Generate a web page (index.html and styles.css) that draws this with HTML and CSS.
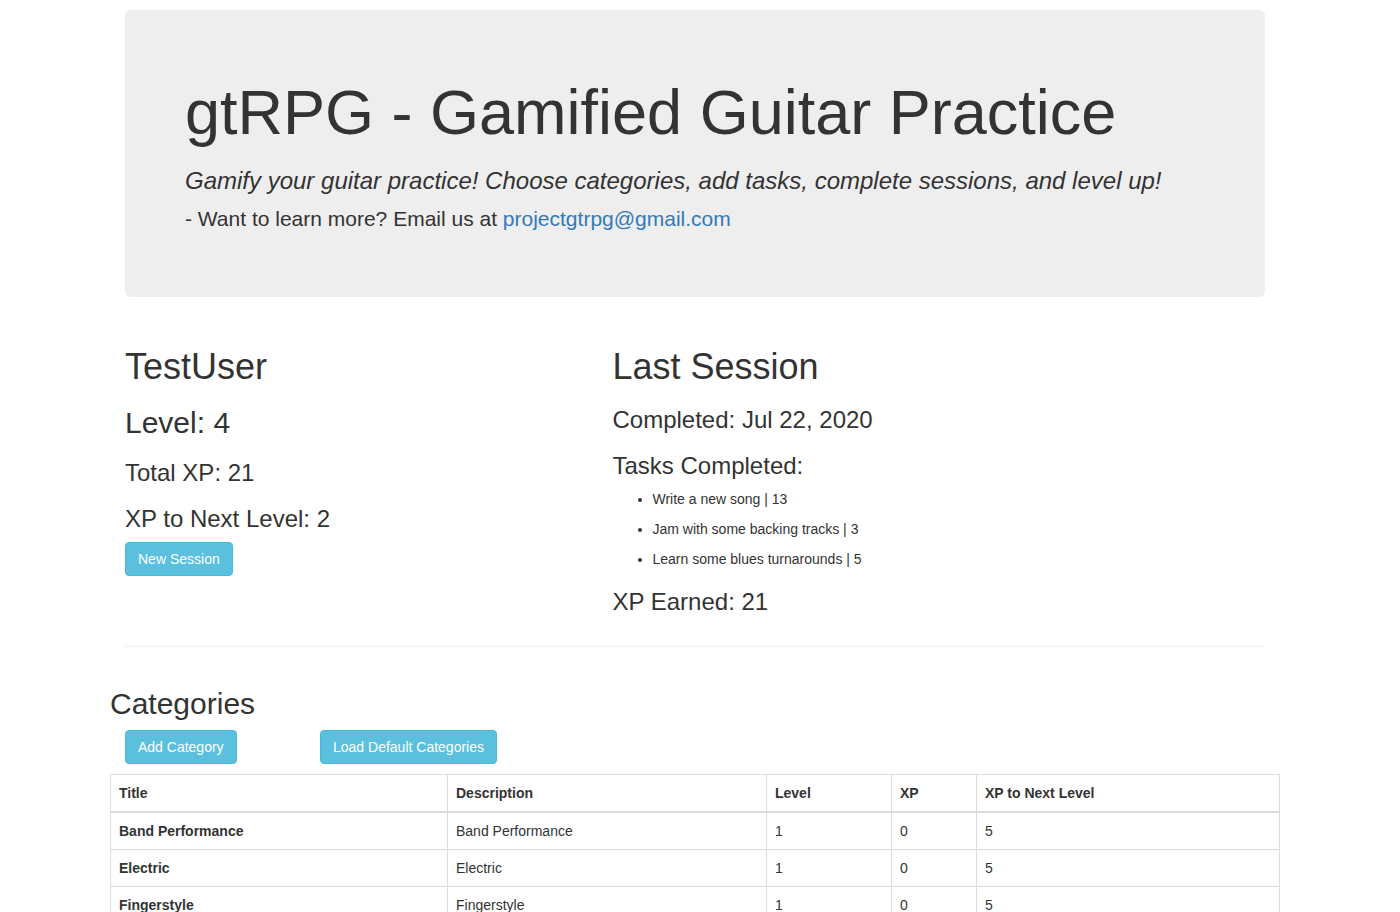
FILE: index.html
```html
<!DOCTYPE html>
<html lang="en">
<head>
<meta charset="utf-8">
<title>gtRPG - Gamified Guitar Practice</title>
<link rel="stylesheet" href="styles.css">
</head>
<body>
<div class="page">
  <div class="jumbotron">
    <h1 class="jumbo-title">gtRPG - Gamified Guitar Practice</h1>
    <p class="tagline"><em>Gamify your guitar practice! Choose categories, add tasks, complete sessions, and level up!</em></p>
    <p class="contact">- Want to learn more? Email us at <a href="#">projectgtrpg@gmail.com</a></p>
  </div>

  <div class="stats-row">
    <div class="col">
      <h1>TestUser</h1>
      <h2 class="level">Level: 4</h2>
      <h3>Total XP: 21</h3>
      <h3 class="last-stat">XP to Next Level: 2</h3>
      <button class="btn">New Session</button>
    </div>
    <div class="col">
      <h1>Last Session</h1>
      <h3>Completed: Jul 22, 2020</h3>
      <h3>Tasks Completed:</h3>
      <ul class="tasks">
        <li>Write a new song | 13</li>
        <li>Jam with some backing tracks | 3</li>
        <li>Learn some blues turnarounds | 5</li>
      </ul>
      <h3 class="earned">XP Earned: 21</h3>
    </div>
  </div>

  <hr class="divider">

  <section class="categories">
    <h2 class="cat-title">Categories</h2>
    <div class="btn-row">
      <div class="btn-cell"><button class="btn">Add Category</button></div>
      <div class="btn-cell"><button class="btn">Load Default Categories</button></div>
    </div>
    <table class="cat-table">
      <colgroup>
        <col class="c-title">
        <col class="c-desc">
        <col class="c-level">
        <col class="c-xp">
        <col class="c-next">
      </colgroup>
      <thead>
        <tr><th>Title</th><th>Description</th><th>Level</th><th>XP</th><th>XP to Next Level</th></tr>
      </thead>
      <tbody>
        <tr><th>Band Performance</th><td>Band Performance</td><td>1</td><td>0</td><td>5</td></tr>
        <tr><th>Electric</th><td>Electric</td><td>1</td><td>0</td><td>5</td></tr>
        <tr><th>Fingerstyle</th><td>Fingerstyle</td><td>1</td><td>0</td><td>5</td></tr>
      </tbody>
    </table>
  </section>
</div>
</body>
</html>
```

FILE: styles.css
```css
* { box-sizing: border-box; }

html, body {
  margin: 0;
  background: #fff;
}

body {
  padding-right: 10px;
  font-family: "Liberation Sans", Arial, Helvetica, sans-serif;
  font-size: 14px;
  line-height: 20px;
  color: #333;
}

.page {
  width: 1170px;
  margin: 0 auto;
}

h1, h2, h3 {
  font-weight: 500;
  color: #333;
}

h1 { font-size: 36px; line-height: 1.1; margin: 20px 0 10px; }
h2 { font-size: 30px; line-height: 1.1; margin: 20px 0 10px; }
h3 { font-size: 24px; line-height: 1.1; margin: 20px 0 10px; }

a { color: #337ab7; text-decoration: none; }

/* Jumbotron */
.jumbotron {
  margin: 10px 15px 30px;
  padding: 48px 60px;
  background: #eee;
  border-radius: 6px;
}

.jumbotron .jumbo-title {
  font-size: 63px;
  line-height: 1.1;
  margin: 20px 0 19px;
}

.jumbotron p {
  font-size: 21px;
  line-height: 30px;
  margin: 0;
}

.jumbotron .tagline {
  font-size: 24px;
  margin-bottom: 8px;
}
.jumbotron .contact { margin-bottom: 15px; }

/* Stats row */
.stats-row {
  display: grid;
  grid-template-columns: 487.5px 682.5px;
}

.stats-row .col {
  padding: 0 15px;
}

.stats-row .level {
  margin-top: 19px;
  padding-bottom: 1px;
}
.stats-row .last-stat { margin-bottom: 9px; }
.stats-row .earned { margin-bottom: 11px; }

.tasks {
  margin: -1px 0 10px;
  padding-left: 40px;
}

.tasks li {
  margin-bottom: 10px;
  line-height: 20px;
}

/* Buttons */
.btn {
  display: inline-block;
  padding: 6px 12px;
  font-family: inherit;
  font-size: 14px;
  line-height: 20px;
  color: #fff;
  background: #5bc0de;
  border: 1px solid #46b8da;
  border-radius: 4px;
  cursor: pointer;
  white-space: nowrap;
}

.divider {
  margin: 20px 15px;
  border: 0;
  border-top: 1px solid #eee;
  height: 0;
}

/* Categories */
.categories {
  padding-top: 20px;
}

.categories .cat-title {
  margin: 0 0 10px;
}

.btn-row {
  display: grid;
  grid-template-columns: repeat(6, 195px);
  margin-bottom: 10px;
}

.btn-cell {
  padding: 0 15px;
}

.cat-table {
  width: 1169px;
  border-collapse: collapse;
  table-layout: fixed;
  border: 1px solid #ddd;
}

.c-title { width: 337px; }
.c-desc { width: 319px; }
.c-level { width: 125px; }
.c-xp { width: 85px; }
.c-next { width: 303px; }

.cat-table th,
.cat-table td {
  padding: 8px;
  line-height: 20px;
  text-align: left;
  vertical-align: top;
  border: 1px solid #ddd;
}

.cat-table th { font-weight: bold; }

.cat-table thead th {
  vertical-align: bottom;
  border-bottom: 2px solid #ddd;
}
```
